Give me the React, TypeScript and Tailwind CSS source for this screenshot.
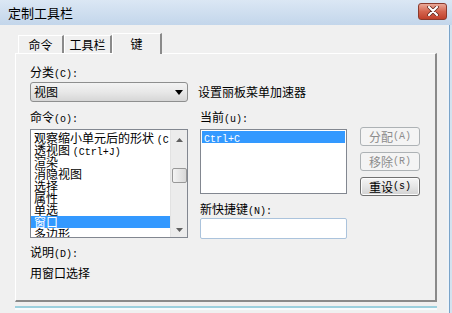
import React from "react";

const cn = "font-['Noto_Sans_CJK_SC',sans-serif]";

// half-width latin, like the SimSun ascii in the dialog
const A = ({ children }: { children: React.ReactNode }) => (
  <span className="font-['Liberation_Mono',monospace] text-[10px]">{children}</span>
);

const commands = [
  <>观察缩小单元后的形状 <A>(C</A></>,
  <>透视图 <A>(Ctrl+J)</A></>,
  <>渲染</>,
  <>消隐视图</>,
  <>选择</>,
  <>属性</>,
  <>单选</>,
  <>窗口</>,
  <>多边形</>,
];

const Btn = ({ label, hot, disabled }: { label: string; hot: string; disabled?: boolean }) => (
  <div
    className={
      disabled
        ? "h-[19px] rounded-[3px] border border-[#adb2b5] bg-[#f4f4f4] text-[#8c8c8c] flex items-center justify-center leading-none"
        : "h-[19px] rounded-[3px] border border-[#707070] bg-gradient-to-b from-[#f6f6f6] via-[#e6e6e6] to-[#d2d2d2] text-black flex items-center justify-center leading-none shadow-[inset_0_0_0_1px_#fcfcfc]"
    }
  >
    {label}
    <A>({hot})</A>
  </div>
);

export default function App() {
  return (
    <div className={`w-[452px] h-[313px] bg-[#f0f0f0] flex flex-col overflow-hidden text-[12px] text-black ${cn}`}>
      {/* title bar */}
      <div className="h-[25px] shrink-0 bg-gradient-to-b from-[#dbe7f4] to-[#c3d6eb] flex items-center pl-[8px] pr-[5px]">
        <span className="text-[13px] leading-none">定制工具栏</span>
        <div className="ml-auto mt-[-3px] w-[29px] h-[17px] rounded-[3px] border border-[#8b3a2c] bg-gradient-to-b from-[#e9a898] via-[#d4644e] to-[#c0402a] flex items-center justify-center">
          <svg width="12" height="10" viewBox="0 0 12 10">
            <path d="M2 1 L10 9 M10 1 L2 9" stroke="#5a2218" strokeWidth="3.6" strokeLinecap="round" />
            <path d="M2 1 L10 9 M10 1 L2 9" stroke="#ffffff" strokeWidth="2.2" strokeLinecap="round" />
          </svg>
        </div>
      </div>

      <div className="flex-1 flex">
        <div className="flex-1 flex flex-col pl-[15px] pt-[8px]">
          {/* tabs */}
          <div className="flex items-end h-[20px] pl-[3px]">
            <div className="w-[46px] h-[18px] border-t border-l border-white border-r-2 border-r-[#8a8a8a] flex items-center justify-center">命令</div>
            <div className="w-[48px] h-[18px] border-t border-l border-white border-r-2 border-r-[#8a8a8a] flex items-center justify-center">工具栏</div>
            <div className="relative z-10 -mb-px w-[50px] h-[21px] bg-[#f0f0f0] border-t border-l border-white border-r-2 border-r-[#8a8a8a] flex items-center justify-center">键</div>
          </div>

          {/* panel */}
          <div className="w-[422px] h-[249px] border-t border-l border-white border-r-2 border-b-2 border-r-[#8a8a8a] border-b-[#8a8a8a] pl-[14px] pt-[11px] flex flex-col">
            <div className="h-[14px] leading-[14px]">分类<A>(C):</A></div>

            <div className="mt-[3px] flex items-center">
              <div className="w-[158px] h-[20px] rounded-[3px] border border-[#8e8f8f] bg-gradient-to-b from-[#f3f3f3] via-[#e8e8e8] to-[#d6d6d6] flex items-center pl-[3px] pr-[4px]">
                <span className="leading-none">视图</span>
                <svg className="ml-auto" width="8" height="5" viewBox="0 0 8 5">
                  <path d="M0 0 H8 L4 5 Z" fill="#000" />
                </svg>
              </div>
              <span className="ml-[10px] leading-none">设置丽板菜单加速器</span>
            </div>

            <div className="mt-[8px] flex h-[14px] leading-[14px]">
              <div className="w-[170px]">命令<A>(o):</A></div>
              <div>当前<A>(u):</A></div>
            </div>

            <div className="mt-[5px] flex items-start">
              {/* command list */}
              <div className="w-[158px] h-[109px] border border-[#828790] bg-white flex overflow-hidden">
                <div className="flex-1 pt-[2px] overflow-hidden">
                  {commands.map((c, i) => (
                    <div
                      key={i}
                      className={
                        i === 7
                          ? "h-[12px] leading-[12px] pl-[3px] whitespace-nowrap bg-[#3399ff] text-white"
                          : "h-[12px] leading-[12px] pl-[3px] whitespace-nowrap"
                      }
                    >
                      {c}
                    </div>
                  ))}
                </div>
                <div className="w-[17px] shrink-0 bg-[#ececec] border-l border-[#e2e2e2] flex flex-col items-center">
                  <svg className="mt-[8px]" width="7" height="4" viewBox="0 0 7 4">
                    <path d="M0 4 L3.5 0 L7 4 Z" fill="#606060" />
                  </svg>
                  <div className="mt-[26px] w-[15px] h-[15px] rounded-[2px] border border-[#989898] bg-gradient-to-r from-[#f4f4f4] to-[#d8d8d8]" />
                  <svg className="mt-auto mb-[5px]" width="7" height="4" viewBox="0 0 7 4">
                    <path d="M0 0 H7 L3.5 4 Z" fill="#606060" />
                  </svg>
                </div>
              </div>

              <div className="ml-[12px] flex flex-col">
                <div className="flex items-start">
                  <div className="w-[147px] h-[65px] border border-[#828790] bg-white pt-px px-px">
                    <div className="h-[12px] leading-[12px] bg-[#3399ff] text-white pl-[2px]">
                      <A>Ctrl+C</A>
                    </div>
                  </div>
                  <div className="ml-[13px] -mt-[2px] w-[60px] flex flex-col gap-[6px]">
                    <Btn label="分配" hot="A" disabled />
                    <Btn label="移除" hot="R" disabled />
                    <Btn label="重设" hot="s" />
                  </div>
                </div>
                <div className="mt-[6px] h-[14px] leading-[14px]">新快捷键<A>(N):</A></div>
                <div className="mt-[2px] w-[147px] h-[21px] border border-[#abc3dc] bg-white rounded-[2px]" />
              </div>
            </div>

            <div className="mt-[6px] h-[14px] leading-[14px]">说明<A>(D):</A></div>
            <div className="mt-[7px] h-[14px] leading-[14px]">用窗口选择</div>
          </div>
          <div className="h-[4px]" />
          <div className="h-[4px] border-t-2 border-[#9cd0de] bg-[#f8fbfd]" />
        </div>
        <div className="w-[15px] flex">
          <div className="flex-1" />
          <div className="w-[2px] bg-[#eef3f8]" />
          <div className="w-px bg-[#7aa3c8]" />
          <div className="w-[2px] bg-[#d4e2ef]" />
        </div>
      </div>
    </div>
  );
}
